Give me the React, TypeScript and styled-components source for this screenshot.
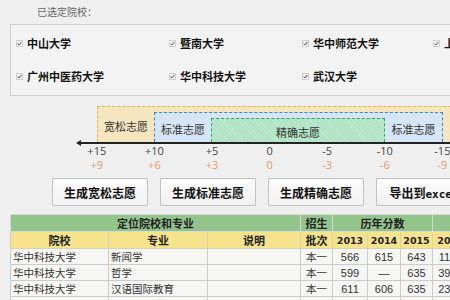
import * as React from 'react'
import styled, { createGlobalStyle } from 'styled-components'

const GlobalStyle = createGlobalStyle`
  html, body {
    margin: 0;
    padding: 0;
    background: #efefef;
    overflow: hidden;
  }
  body {
    font-family: "Noto Sans CJK SC", "Noto Sans", sans-serif;
  }
`

const Page = styled.div`
  width: 600px;
  height: 300px;
  overflow: hidden;
`

const Title = styled.div`
  height: 24px;
  padding-left: 37px;
  font-size: 10px;
  line-height: 24px;
  color: #666;
`

const SchoolBox = styled.div`
  box-sizing: border-box;
  margin-left: 10px;
  height: 72px;
  padding: 7px 0 0 5px;
  border: 1px solid #cdcdcd;
  background: #f3f3f3;
  display: grid;
  grid-template-columns: 153px 133px 131px 131px;
  grid-auto-rows: 22px;
  row-gap: 11px;
`

const SchoolItem = styled.label`
  display: flex;
  align-items: center;
  gap: 4px;
  font-size: 11px;
  font-weight: 700;
  color: #111;
  white-space: nowrap;
`

const CheckBox = styled.span`
  box-sizing: border-box;
  width: 7px;
  height: 7px;
  border: 1px solid #cfcfcf;
  background: #f7f7f7;
  display: flex;
  align-items: center;
  justify-content: center;
`

const Scale = styled.div`
  padding: 10px 0 0 68px;
`

const Zones = styled.div`
  margin-left: 29px;
  height: 36px;
  display: flex;
  align-items: flex-end;
`

const Zone = styled.div<{ $w: number; $h: number; $bg: string; $line: string }>`
  box-sizing: border-box;
  width: ${p => p.$w}px;
  height: ${p => p.$h}px;
  flex: none;
  align-self: flex-end;
  display: flex;
  align-items: stretch;
  background: ${p => p.$bg};
  border: 1px dashed ${p => p.$line};
  border-bottom: none;
`

const Hatched = styled(Zone)`
  background: repeating-linear-gradient(
    45deg,
    #bfead0 0 1px,
    #b0e2c3 1px 3px
  );
`

const ZoneLabel = styled.div<{ $w: number }>`
  width: ${p => p.$w}px;
  flex: none;
  display: flex;
  align-items: center;
  justify-content: center;
  padding-top: 3px;
  box-sizing: border-box;
  font-size: 11px;
  color: #333;
  white-space: nowrap;
`

const Center = styled(ZoneLabel)`
  flex: 1;
  width: auto;
`

const Axis = styled.div`
  position: relative;
  margin-left: 12px;
  height: 2px;
  width: 470px;
  background: #222;
  &::before {
    content: '';
    position: absolute;
    left: -4px;
    top: -2px;
    border-right: 5px solid #222;
    border-top: 3px solid transparent;
    border-bottom: 3px solid transparent;
  }
`

const Ticks = styled.div<{ $color: string; $lh: number }>`
  display: grid;
  grid-template-columns: repeat(7, 57.6px);
  font-family: "Open Sans", sans-serif;
  font-size: 11px;
  line-height: ${p => p.$lh}px;
  color: ${p => p.$color};
  text-align: center;
`

const ButtonRow = styled.div`
  margin-top: 7px;
  padding-left: 52px;
  display: flex;
  gap: 12px;
`

const Button = styled.button`
  box-sizing: border-box;
  width: 96px;
  height: 28px;
  flex: none;
  padding: 0;
  border: 1px solid #c3c3c3;
  border-radius: 1px;
  background: linear-gradient(#fbfbfb, #f1f1f1);
  font-family: "Noto Sans CJK SC", sans-serif;
  font-size: 12px;
  font-weight: 700;
  color: #111;
  white-space: nowrap;
  overflow: hidden;
`

const Excel = styled.span`
  font-family: "DejaVu Sans Mono", monospace;
  font-size: 11px;
`

const Table = styled.table`
  margin: 8px 0 0 10px;
  border-collapse: collapse;
  table-layout: fixed;
  width: 566px;
  font-size: 10px;
  color: #333;
`

const GroupCell = styled.th`
  height: 16px;
  padding: 0;
  background: #93c48c;
  border: 1px solid #d4dcd2;
  font-size: 11px;
  font-weight: 700;
  color: #222;
  white-space: nowrap;
  overflow: hidden;
`

const HeadCell = styled.th<{ $num?: boolean }>`
  height: 15px;
  padding: 0;
  background: #f6e38c;
  border: 1px solid #d8d2b0;
  font-family: ${p => (p.$num ? '"DejaVu Sans", sans-serif' : '"Noto Sans CJK SC", sans-serif')};
  font-size: ${p => (p.$num ? '9.5px' : '11px')};
  font-weight: 700;
  color: #222;
  white-space: nowrap;
  overflow: hidden;
`

const Cell = styled.td<{ $align?: string; $num?: boolean }>`
  height: 15px;
  padding: 0 2px;
  background: #f6f6f4;
  border: 1px solid #cbcbcb;
  text-align: ${p => p.$align || 'left'};
  font-family: ${p => (p.$num ? '"Liberation Sans", sans-serif' : '"Noto Sans CJK SC", sans-serif')};
  font-size: ${p => (p.$num ? '11px' : '10.5px')};
  color: #333;
  white-space: nowrap;
  overflow: hidden;
`

const schools = [
  '中山大学',
  '暨南大学',
  '华中师范大学',
  '上海交通大学',
  '广州中医药大学',
  '华中科技大学',
  '武汉大学',
]

const topTicks = ['+15', '+10', '+5', '0', '-5', '-10', '-15']
const lowTicks = ['+9', '+6', '+3', '0', '-3', '-6', '-9']

const rows = [
  ['华中科技大学', '新闻学', '', '本一', '566', '615', '643', '1106'],
  ['华中科技大学', '哲学', '', '本一', '599', '—', '635', '3935'],
  ['华中科技大学', '汉语国际教育', '', '本一', '611', '606', '635', '2351'],
  ['华中科技大学', '广播电视编导', '', '本一', '610', '608', '635', '3022'],
]

const widths = [98, 99, 93, 32, 35, 33, 32, 36, 36, 36, 36]

const Check = () => (
  <CheckBox>
    <svg width="5" height="5" viewBox="0 0 5 5">
      <path d="M0.5 2.6 L1.9 4 L4.5 0.8" fill="none" stroke="#555" strokeWidth="1" />
    </svg>
  </CheckBox>
)

const App = () => (
  <Page>
    <GlobalStyle />
    <Title>已选定院校：</Title>
    <SchoolBox>
      {schools.map(name => (
        <SchoolItem key={name}>
          <Check />
          {name}
        </SchoolItem>
      ))}
    </SchoolBox>

    <Scale>
      <Zones>
        <Zone $w={440} $h={36} $bg="#f6e6c0" $line="#e2b84a">
          <ZoneLabel $w={56}>宽松志愿</ZoneLabel>
          <Zone $w={289} $h={30} $bg="#d6e6f6" $line="#3a86c8">
            <ZoneLabel $w={56}>标准志愿</ZoneLabel>
            <Hatched $w={174} $h={24} $bg="" $line="#34a86a">
              <Center $w={0}>精确志愿</Center>
            </Hatched>
            <ZoneLabel $w={57}>标准志愿</ZoneLabel>
          </Zone>
        </Zone>
      </Zones>
      <Axis />
      <Ticks $color="#444" $lh={14}>
        {topTicks.map(t => (
          <span key={t}>{t}</span>
        ))}
      </Ticks>
      <Ticks $color="#e39a6c" $lh={13}>
        {lowTicks.map((t, i) => (
          <span key={i}>{t}</span>
        ))}
      </Ticks>
    </Scale>

    <ButtonRow>
      <Button>生成宽松志愿</Button>
      <Button>生成标准志愿</Button>
      <Button>生成精确志愿</Button>
      <Button>
        导出到<Excel>excel</Excel>
      </Button>
    </ButtonRow>

    <Table>
      <colgroup>
        {widths.map((w, i) => (
          <col key={i} style={{ width: w }} />
        ))}
      </colgroup>
      <thead>
        <tr>
          <GroupCell colSpan={3}>定位院校和专业</GroupCell>
          <GroupCell>招生</GroupCell>
          <GroupCell colSpan={3}>历年分数</GroupCell>
          <GroupCell colSpan={4}>历年位次</GroupCell>
        </tr>
        <tr>
          <HeadCell>院校</HeadCell>
          <HeadCell>专业</HeadCell>
          <HeadCell>说明</HeadCell>
          <HeadCell>批次</HeadCell>
          <HeadCell $num>2013</HeadCell>
          <HeadCell $num>2014</HeadCell>
          <HeadCell $num>2015</HeadCell>
          <HeadCell $num>2016</HeadCell>
          <HeadCell $num>2013</HeadCell>
          <HeadCell $num>2014</HeadCell>
          <HeadCell $num>2015</HeadCell>
        </tr>
      </thead>
      <tbody>
        {rows.map((r, i) => (
          <tr key={i}>
            <Cell>{r[0]}</Cell>
            <Cell>{r[1]}</Cell>
            <Cell>{r[2]}</Cell>
            <Cell $align="center">{r[3]}</Cell>
            <Cell $align="center" $num>{r[4]}</Cell>
            <Cell $align="center" $num>{r[5]}</Cell>
            <Cell $align="center" $num>{r[6]}</Cell>
            <Cell $align="center" $num>{r[7]}</Cell>
            <Cell $align="center" $num>1890</Cell>
            <Cell $align="center" $num>2105</Cell>
            <Cell $align="center" $num>1987</Cell>
          </tr>
        ))}
      </tbody>
    </Table>
  </Page>
)

export default App
